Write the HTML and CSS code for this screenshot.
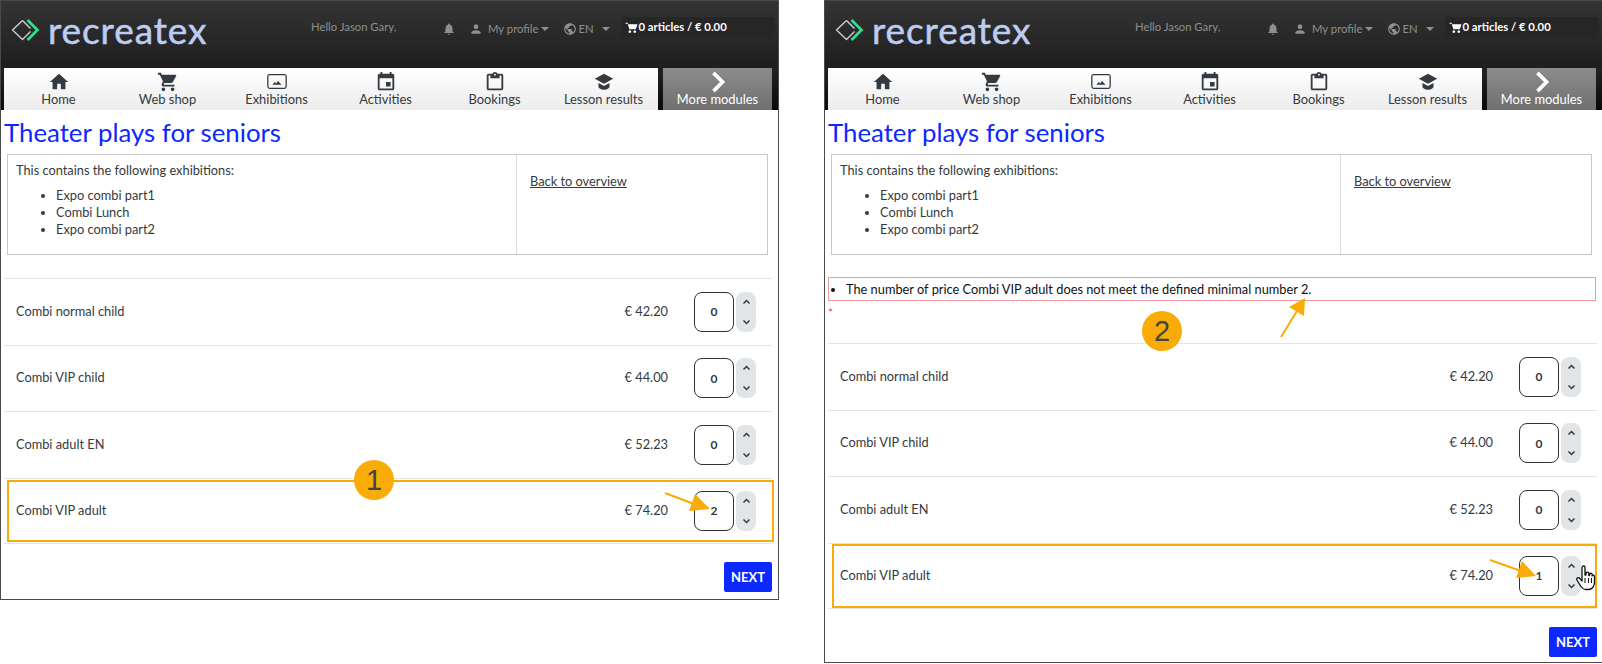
FILE: index.html
```html
<!DOCTYPE html>
<html lang="en">
<head>
<meta charset="utf-8">
<title>Theater plays for seniors</title>
<link rel="stylesheet" href="styles.css">
</head>
<body>
<svg class="defs" width="0" height="0" aria-hidden="true">
  <symbol id="i-logo" viewBox="0 0 30 24">
    <path d="M12 2.500 2 12l10 9.500 8-8" fill="none" stroke="#c9ced8" stroke-width="1.400" stroke-linejoin="round"/>
    <path d="M12 2.500 20 10.500" fill="none" stroke="#c9ced8" stroke-width="1.400"/>
    <path d="M17 2 27 12 17 22" fill="none" stroke="#2be58f" stroke-width="2.600"/>
  </symbol>
  <symbol id="i-home" viewBox="0 0 24 24"><path d="M10 20v-6h4v6h5v-8h3L12 3 2 12h3v8z"/></symbol>
  <symbol id="i-cart" viewBox="0 0 24 24"><path d="M7 18c-1.100 0-1.990.9-1.990 2S5.900 22 7 22s2-.9 2-2-.9-2-2-2zM1 2v2h2l3.600 7.590-1.350 2.450c-.16.28-.25.61-.25.96 0 1.100.9 2 2 2h12v-2H7.420c-.14 0-.25-.11-.25-.25l.03-.12.9-1.630h7.450c.75 0 1.410-.41 1.750-1.030l3.580-6.490c.08-.14.12-.31.12-.48 0-.55-.45-1-1-1H5.210l-.94-2H1zm16 16c-1.100 0-1.990.9-1.990 2s.89 2 1.990 2 2-.9 2-2-.9-2-2-2z"/></symbol>
  <symbol id="i-photo" viewBox="0 0 24 24"><rect x="2" y="4" width="20" height="15" rx="2" fill="none" stroke="currentColor" stroke-width="1.400"/><path d="M7 15l2.500-3 1.500 1.500 2-2.500 4 4z"/></symbol>
  <symbol id="i-event" viewBox="0 0 24 24"><path d="M17 12h-5v5h5v-5zM16 1v2H8V1H6v2H5c-1.110 0-1.990.9-1.990 2L3 19c0 1.100.89 2 2 2h14c1.100 0 2-.9 2-2V5c0-1.100-.9-2-2-2h-1V1h-2zm3 18H5V8h14v11z"/></symbol>
  <symbol id="i-clip" viewBox="0 0 24 24"><path d="M19 3h-4.180C14.400 1.840 13.300 1 12 1s-2.400.84-2.820 2H5c-1.100 0-2 .9-2 2v14c0 1.100.9 2 2 2h14c1.100 0 2-.9 2-2V5c0-1.100-.9-2-2-2zm-7 0c.55 0 1 .45 1 1s-.45 1-1 1-1-.45-1-1 .45-1 1-1zm7 16H5V5h2v3h10V5h2v14z"/></symbol>
  <symbol id="i-school" viewBox="0 0 24 24"><path d="M12 3 22 8.500 12 14 2 8.500zM6 13v4c0 2 3 3.500 6 3.500s6-1.500 6-3.500v-4l-6 3.300z"/></symbol>
  <symbol id="i-bell" viewBox="0 0 24 24"><path d="M12 22c1.100 0 2-.9 2-2h-4c0 1.100.89 2 2 2zm6-6v-5c0-3.070-1.640-5.640-4.500-6.320V4c0-.83-.67-1.500-1.500-1.500s-1.500.67-1.500 1.500v.68C7.630 5.360 6 7.920 6 11v5l-2 2v1h16v-1l-2-2z"/></symbol>
  <symbol id="i-user" viewBox="0 0 24 24"><path d="M12 12c2.210 0 4-1.790 4-4s-1.790-4-4-4-4 1.790-4 4 1.790 4 4 4zm0 2c-2.670 0-8 1.340-8 4v2h16v-2c0-2.660-5.330-4-8-4z"/></symbol>
  <symbol id="i-globe" viewBox="0 0 24 24"><path d="M12 2C6.480 2 2 6.480 2 12s4.480 10 10 10 10-4.480 10-10S17.520 2 12 2zm-1 17.930c-3.950-.49-7-3.850-7-7.930 0-.62.08-1.210.21-1.790L9 15v1c0 1.100.9 2 2 2v1.930zm6.900-2.540c-.26-.81-1-1.390-1.900-1.390h-1v-3c0-.55-.45-1-1-1H8v-2h2c.55 0 1-.45 1-1V7h2c1.100 0 2-.9 2-2v-.41c2.930 1.190 5 4.060 5 7.410 0 2.080-.8 3.970-2.100 5.390z"/></symbol>
  <symbol id="i-minicart" viewBox="0 0 24 24"><path d="M1 3h4l1 3h17l-3 9H8L5 5H1zM9 17a2.500 2.500 0 1 0 .01 0zM18 17a2.500 2.500 0 1 0 .01 0z"/></symbol>
  <symbol id="i-more" viewBox="0 0 24 24"><path d="M7 2l10 10L7 22" fill="none" stroke="currentColor" stroke-width="4"/></symbol>
  <symbol id="i-up" viewBox="0 0 12 8"><path d="M2 6l4-4 4 4" fill="none" stroke="currentColor" stroke-width="2"/></symbol>
  <symbol id="i-down" viewBox="0 0 12 8"><path d="M2 2l4 4 4-4" fill="none" stroke="currentColor" stroke-width="2"/></symbol>
  <symbol id="i-hand" viewBox="0 0 20 26"><path d="M6 2.500c0-2 3-2 3 0V10l1 0V8.500c0-1.800 2.800-1.800 2.800 0V10.500h.7V9.500c0-1.700 2.600-1.700 2.600 0v1.500c0-1.300 2.400-1.300 2.400.5v6c0 4-2.500 7-6 7H10c-3 0-4.500-2-6-4.500L1 15c-1-2 1.500-3.200 2.800-1.500L6 16z" fill="#fff" stroke="#111" stroke-width="1.300" stroke-linejoin="round"/><path d="M9 18v-5M12.500 18v-5M15.500 18v-5" stroke="#111" stroke-width="1"/></symbol>
</svg>

<main class="sheet">
  <section class="win win-a">
    <header class="top">
      <div class="logo"><svg class="logo-mark"><use href="#i-logo"/></svg><span>recreatex</span></div>
      <div class="hello">Hello Jason Gary,</div>
      <svg class="ti bell"><use href="#i-bell"/></svg>
      <svg class="ti user"><use href="#i-user"/></svg>
      <span class="tl">My profile</span><i class="caret"></i>
      <svg class="ti globe"><use href="#i-globe"/></svg>
      <span class="tl">EN</span><i class="caret caret-en"></i>
      <div class="basket"><svg class="mini"><use href="#i-minicart"/></svg><b>0 articles / € 0.00</b></div>
    </header>
    <nav class="nav">
      <a class="cell"><svg><use href="#i-home"/></svg>Home</a>
      <a class="cell"><svg><use href="#i-cart"/></svg>Web shop</a>
      <a class="cell"><svg><use href="#i-photo"/></svg>Exhibitions</a>
      <a class="cell"><svg><use href="#i-event"/></svg>Activities</a>
      <a class="cell"><svg><use href="#i-clip"/></svg>Bookings</a>
      <a class="cell"><svg><use href="#i-school"/></svg>Lesson results</a>
      <a class="cell more"><svg><use href="#i-more"/></svg>More modules</a>
    </nav>
    <h1 class="title">Theater plays for seniors</h1>
    <div class="info">
      <div class="info-l">
        <p>This contains the following exhibitions:</p>
        <ul><li>Expo combi part1</li><li>Combi Lunch</li><li>Expo combi part2</li></ul>
      </div>
      <div class="info-r"><a class="back">Back to overview</a></div>
    </div>
    <div class="rows">
      <div class="row"><span class="name">Combi normal child</span><span class="price">€ 42.20</span><span class="qty">0</span><span class="spin"><svg><use href="#i-up"/></svg><svg><use href="#i-down"/></svg></span></div>
      <div class="row"><span class="name">Combi VIP child</span><span class="price">€ 44.00</span><span class="qty">0</span><span class="spin"><svg><use href="#i-up"/></svg><svg><use href="#i-down"/></svg></span></div>
      <div class="row"><span class="name">Combi adult EN</span><span class="price">€ 52.23</span><span class="qty">0</span><span class="spin"><svg><use href="#i-up"/></svg><svg><use href="#i-down"/></svg></span></div>
      <div class="row"><span class="name">Combi VIP adult</span><span class="price">€ 74.20</span><span class="qty">2</span><span class="spin"><svg><use href="#i-up"/></svg><svg><use href="#i-down"/></svg></span><span class="mark"></span></div>
    </div>
    <div class="actions"><a class="next">NEXT</a></div>
    <svg class="over" viewBox="0 0 777 598"><path d="M664 492 693 503" stroke="#f9ab07" stroke-width="2" fill="none"/><path d="M688 510 709 508 694 493z" fill="#f9ab07"/></svg>
    <span class="badge badge-1">1</span>
  </section>

  <section class="win win-b">
    <header class="top">
      <div class="logo"><svg class="logo-mark"><use href="#i-logo"/></svg><span>recreatex</span></div>
      <div class="hello">Hello Jason Gary,</div>
      <svg class="ti bell"><use href="#i-bell"/></svg>
      <svg class="ti user"><use href="#i-user"/></svg>
      <span class="tl">My profile</span><i class="caret"></i>
      <svg class="ti globe"><use href="#i-globe"/></svg>
      <span class="tl">EN</span><i class="caret caret-en"></i>
      <div class="basket"><svg class="mini"><use href="#i-minicart"/></svg><b>0 articles / € 0.00</b></div>
    </header>
    <nav class="nav">
      <a class="cell"><svg><use href="#i-home"/></svg>Home</a>
      <a class="cell"><svg><use href="#i-cart"/></svg>Web shop</a>
      <a class="cell"><svg><use href="#i-photo"/></svg>Exhibitions</a>
      <a class="cell"><svg><use href="#i-event"/></svg>Activities</a>
      <a class="cell"><svg><use href="#i-clip"/></svg>Bookings</a>
      <a class="cell"><svg><use href="#i-school"/></svg>Lesson results</a>
      <a class="cell more"><svg><use href="#i-more"/></svg>More modules</a>
    </nav>
    <h1 class="title">Theater plays for seniors</h1>
    <div class="info">
      <div class="info-l">
        <p>This contains the following exhibitions:</p>
        <ul><li>Expo combi part1</li><li>Combi Lunch</li><li>Expo combi part2</li></ul>
      </div>
      <div class="info-r"><a class="back">Back to overview</a></div>
    </div>
    <div class="error"><ul><li>The number of price Combi VIP adult does not meet the defined minimal number 2.</li></ul></div>
    <div class="star">*</div>
    <div class="rows rows-b">
      <div class="row"><span class="name">Combi normal child</span><span class="price">€ 42.20</span><span class="qty">0</span><span class="spin"><svg><use href="#i-up"/></svg><svg><use href="#i-down"/></svg></span></div>
      <div class="row"><span class="name">Combi VIP child</span><span class="price">€ 44.00</span><span class="qty">0</span><span class="spin"><svg><use href="#i-up"/></svg><svg><use href="#i-down"/></svg></span></div>
      <div class="row"><span class="name">Combi adult EN</span><span class="price">€ 52.23</span><span class="qty">0</span><span class="spin"><svg><use href="#i-up"/></svg><svg><use href="#i-down"/></svg></span></div>
      <div class="row"><span class="name">Combi VIP adult</span><span class="price">€ 74.20</span><span class="qty">1</span><span class="spin"><svg><use href="#i-up"/></svg><svg><use href="#i-down"/></svg></span><span class="mark"></span></div>
    </div>
    <div class="actions"><a class="next">NEXT</a></div>
    <svg class="over" viewBox="0 0 777 661"><path d="M665 559 696 570" stroke="#f9ab07" stroke-width="2" fill="none"/><path d="M691 577 711 575 697 560z" fill="#f9ab07"/><path d="M456 336 472 310" stroke="#f9ab07" stroke-width="2" fill="none"/><path d="M464 306 480 297 479 315z" fill="#f9ab07"/></svg>
    <span class="badge badge-2">2</span>
    <svg class="hand"><use href="#i-hand"/></svg>
  </section>
</main>
</body>
</html>
```

FILE: styles.css
```css
* { box-sizing: border-box; }
html, body { margin: 0; padding: 0; background: #fff; }
body { width: 1602px; height: 664px; overflow: hidden; font-family: Lato, "Open Sans", sans-serif; font-size: 12.8px; color: #343a40; }
.defs { position: absolute; }
.sheet { display: flex; gap: 45px; align-items: flex-start; }

.win { position: relative; flex: none; border: 1px solid #4a4a4a; background: #fff; }
.win-a { width: 779px; height: 600px; }
.win-b { width: 778px; height: 663px; border-right: 0; }

.top { height: 67px; display: flex; align-items: flex-start; color: #8f8f8f; font-size: 11.3px; white-space: nowrap; background: linear-gradient(#343434, #1e1e1e); padding-top: 18px; line-height: 18px; }
.logo { width: 310px; display: flex; align-items: center; height: 28px; margin-top: -3px; padding-left: 9px; color: #bccdf1; font-size: 37px; letter-spacing: .9px; -webkit-text-stroke: .5px #bccdf1; line-height: 28px; }
.logo-mark { width: 31px; height: 24px; margin-right: 7px; }
.hello { width: 131px; margin-top: -1px; }
.ti { flex: none; width: 14px; height: 14px; fill: #8f8f8f; margin-top: 3px; }
.bell { margin-right: 13px; }
.user { margin-right: 5px; }
.tl { margin-top: 1px; }
.caret { flex: none; width: 0; height: 0; margin: 8px 14px 0 3px; border: 4px solid transparent; border-top-color: #8f8f8f; border-bottom: 0; }
.globe { margin-right: 1px; }
.caret-en { margin: 8px 11px 0 8px; }
.basket { flex: none; width: 153px; height: 20px; margin-top: -2px; display: flex; align-items: center; padding-left: 4px; background: #262626; color: #fff; font-size: 11.3px; }
.mini { width: 13px; height: 13px; fill: #fff; margin-right: 1px; }
.basket b { font-weight: 700; }

.nav { height: 42px; display: flex; padding-left: 3px; background: linear-gradient(#222, #0a0a0a); padding-right: 5px; }
.cell { flex: none; width: 109px; display: flex; flex-direction: column; align-items: center; background: linear-gradient(#fff, #ececec); color: #343a40; font-size: 12.9px; line-height: 15px; padding-top: 3px; }
.cell svg { width: 24px; height: 22px; fill: #343a40; color: #343a40; margin-bottom: -1px; }
.more { margin-left: 5px; background: linear-gradient(#8c8c8c, #6f6f6f); color: #fff; }
.more svg { fill: none; color: #fff; }

.title { margin: 6px 0 0 3px; height: 38px; font-size: 25.8px; line-height: 32px; font-weight: 400; color: #0a28ff; }
.info { margin: 0 10px 0 6px; height: 101px; display: flex; border: 1px solid #c8c8c8; }
.info-l { width: 509px; padding: 7px 8px; border-right: 1px solid #ddd; }
.info-l p { margin: 0 0 9px; line-height: 16px; }
.info-l ul { margin: 0; padding-left: 40px; line-height: 17px; }
.info-r { padding: 18px 13px; }
.back { color: #343a40; text-decoration: underline; line-height: 16px; }

.rows { margin: 23px 6px 0 3px; }
.rows-b { margin: 0 0 0 3px; width: 769px; }
.row { position: relative; height: 66.5px; display: flex; align-items: center; padding: 0 16px 0 12px; border-top: 1px solid #e4e4e4; }
.row:last-child { border-bottom: 1px solid #e4e4e4; }
.name { flex: 1; margin-top: -2px; }
.price { margin-right: 26px; margin-top: -2px; }
.qty { width: 40px; height: 40px; display: flex; align-items: center; justify-content: center; border: 1px solid #333; border-radius: 8px; font-size: 12px; font-weight: 700; }
.spin { width: 20px; height: 40px; margin-left: 2px; display: flex; flex-direction: column; justify-content: space-between; align-items: center; padding: 7px 0; background: #e2e5e8; border-radius: 8px; color: #343a40; }
.spin svg { width: 9px; height: 6px; }
.mark { position: absolute; left: 3px; right: -2px; top: 1px; bottom: 1px; border: 2px solid #f9ab07; }
.rows-b .mark { left: 4px; right: 0; top: 0; bottom: 0; }

.actions { display: flex; justify-content: flex-end; padding: 18px 6px 0 0; }
.win-b .actions { padding-right: 5px; }
.next { width: 48px; height: 30px; display: flex; align-items: center; justify-content: center; background: #0a28ff; border-radius: 2px; color: #fff; font-size: 13px; font-weight: 700; }

.error { margin: 22px 0 0 3px; width: 768px; height: 24px; border: 1px solid #f19ba0; color: #111; line-height: 22px; }
.error ul { margin: 0; padding-left: 17px; }
.star { height: 42px; margin-left: 3px; color: #f0386e; font-size: 12px; line-height: 24px; }

.over { position: absolute; left: 0; top: 0; width: 100%; height: 100%; pointer-events: none; }
.badge { position: absolute; width: 40px; height: 40px; border-radius: 50%; background: #f9ab07; color: #444; font-family: "Liberation Sans", sans-serif; font-size: 29px; line-height: 40px; text-align: center; }
.badge-1 { left: 353px; top: 459px; }
.badge-2 { left: 317px; top: 310px; }
.hand { position: absolute; left: 751px; top: 564px; width: 20px; height: 26px; }
```
